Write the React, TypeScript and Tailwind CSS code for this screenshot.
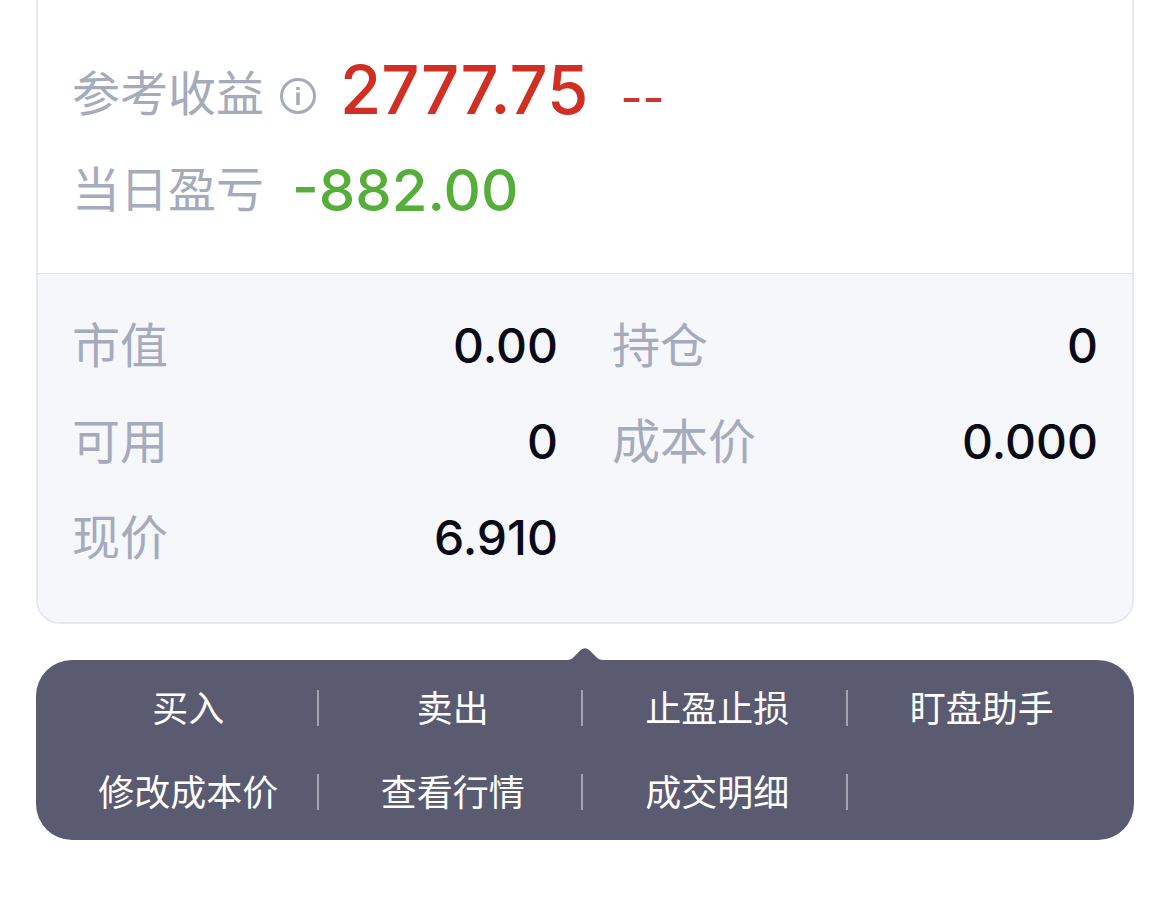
const details = [
  { label: '市值', value: '0.00' },
  { label: '持仓', value: '0' },
  { label: '可用', value: '0' },
  { label: '成本价', value: '0.000' },
  { label: '现价', value: '6.910' },
];

const actions = ['买入', '卖出', '止盈止损', '盯盘助手', '修改成本价', '查看行情', '成交明细'];

function InfoIcon() {
  return (
    <svg className="w-9 h-9" fill="none" viewBox="0 0 36 36" aria-hidden="true">
      <circle cx="18" cy="18" r="16.5" stroke="currentColor" strokeWidth="3" />
      <path fill="currentColor" d="M16.2 9h3.6v3h-3.6zM16.2 14.500h3.600V27h-3.600z" />
    </svg>
  );
}

export default function App() {
  return (
    <main className="min-h-screen bg-white px-9 pb-18 font-['Inter','Noto_Sans_CJK_SC',sans-serif]">
      {/* Position card */}
      <section className="border-2 border-t-0 border-[#e6e8ed] rounded-b-3xl overflow-hidden">
        <div className="pt-[46px] pb-[35px] px-[34px]">
          <div className="flex items-center h-24">
            <span className="text-[48px] leading-[72px] text-[#a5abbb]">参考收益</span>
            <button type="button" aria-label="参考收益说明" className="ml-4 mt-1 text-[#a5abbb]">
              <InfoIcon />
            </button>
            <span className="ml-6 pb-2 text-[67px] leading-[80px] font-medium text-[#d12f23]">2777.75</span>
            <span className="ml-8 pt-2 text-[48px] leading-[72px] text-[#c8382c]">--</span>
          </div>
          <div className="flex items-center h-24">
            <span className="text-[48px] leading-[72px] text-[#a5abbb]">当日盈亏</span>
            <span className="ml-7 text-[58px] leading-[72px] font-medium text-[#55ae3a]">-882.00</span>
          </div>
        </div>

        {/* Details */}
        <dl className="grid grid-cols-2 gap-x-[54px] border-t border-[#dfe2e8] bg-[#f5f7fb] px-[34px] pt-6 pb-9">
          {details.map((item) => (
            <div key={item.label} className="flex items-center justify-between h-24 text-[48px] leading-[72px]">
              <dt className="text-[#a5abbb]">{item.label}</dt>
              <dd className="font-medium text-[#090a18]">{item.value}</dd>
            </div>
          ))}
        </dl>
      </section>

      {/* Action menu */}
      <nav className="relative mt-9 rounded-[36px] bg-[#5a5b70] py-[6px] pl-[18px] pr-[22px]">
        <svg
          className="absolute left-1/2 bottom-full w-9 h-3 -translate-x-1/2 text-[#5a5b70]"
          viewBox="0 0 36 12"
          fill="currentColor"
          aria-hidden="true"
        >
          <path d="M0 12C3 12 4.5 11 6.5 9.200L13 2.800C16 -.6 20 -.6 23 2.800L29.500 9.200C31.500 11 33 12 36 12Z" />
        </svg>
        <ul className="grid grid-cols-4">
          {actions.map((action, i) => (
            <li key={action} className="flex items-center h-21 pl-[6px]">
              <button type="button" className="flex-1 pt-[2px] text-center text-[36px] leading-[54px] text-white whitespace-nowrap">
                {action}
              </button>
              <span className={i === 3 ? 'w-[2px] h-9' : 'w-[2px] h-9 bg-[#a3a4b1]'} />
            </li>
          ))}
        </ul>
      </nav>
    </main>
  );
}
